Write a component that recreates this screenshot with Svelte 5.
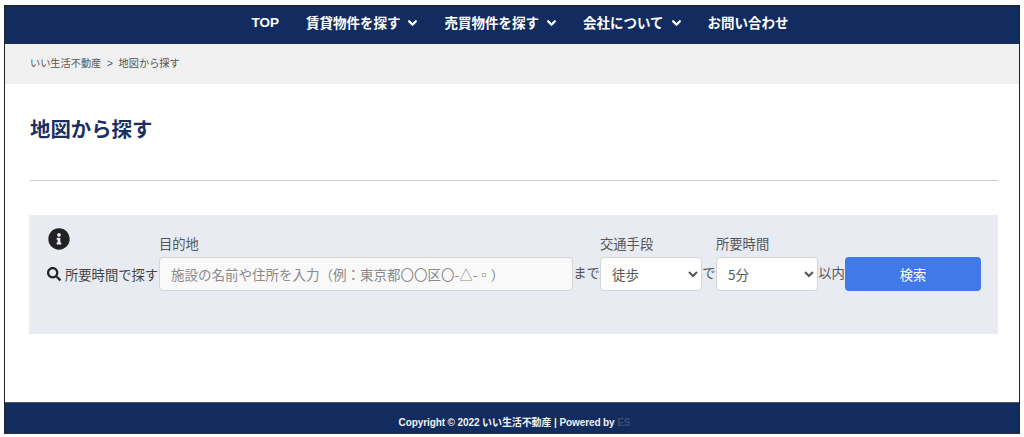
<script>
	const menu = [
		{ label: "TOP" },
		{ label: "賃貸物件を探す", sub: true },
		{ label: "売買物件を探す", sub: true },
		{ label: "会社について", sub: true },
		{ label: "お問い合わせ" }
	];
	const chevron = "M207.029 381.476L12.686 187.132c-9.373-9.373-9.373-24.569 0-33.941l22.667-22.667c9.357-9.357 24.522-9.375 33.901-.04L224 284.505l154.745-154.021c9.379-9.335 24.544-9.317 33.901.04l22.667 22.667c9.373 9.373 9.373 24.569 0 33.941L240.971 381.476c-9.373 9.372-24.569 9.372-33.942 0z";
	let place = "";
	let transport = "徒歩";
	let minutes = "5分";
</script>

<div class="page">
	<div class="frame">
		<nav class="nav">
			{#each menu as item}
				<span class="nav-item">
					{item.label}
					{#if item.sub}
						<svg class="chev" viewBox="0 0 448 512"><path d={chevron} /></svg>
					{/if}
				</span>
			{/each}
		</nav>
		<div class="crumbs">いい生活不動産 &nbsp;&gt;&nbsp; 地図から探す</div>
		<main class="content">
			<h1 class="title">地図から探す</h1>
			<hr class="rule" />
			<section class="panel">
				<div class="side">
					<svg class="info" viewBox="0 0 512 512"><path d="M256 8C119.043 8 8 119.083 8 256c0 136.997 111.043 248 248 248s248-111.003 248-248C504 119.083 392.957 8 256 8zm0 110c23.196 0 42 18.804 42 42s-18.804 42-42 42-42-18.804-42-42 18.804-42 42-42zm56 254c0 6.627-5.373 12-12 12h-88c-6.627 0-12-5.373-12-12v-24c0-6.627 5.373-12 12-12h12v-64h-12c-6.627 0-12-5.373-12-12v-24c0-6.627 5.373-12 12-12h64c6.627 0 12 5.373 12 12v100h12c6.627 0 12 5.373 12 12v24z" /></svg>
					<div class="side-label">
						<svg class="search" viewBox="0 0 512 512"><path d="M505 442.7L405.3 343c-4.5-4.5-10.6-7-17-7H372c27.6-35.3 44-79.7 44-128C416 93.1 322.9 0 208 0S0 93.1 0 208s93.1 208 208 208c48.3 0 92.7-16.4 128-44v16.3c0 6.4 2.5 12.5 7 17l99.7 99.7c9.4 9.4 24.6 9.4 33.9 0l28.3-28.3c9.4-9.4 9.4-24.6.1-34zM208 336c-70.7 0-128-57.2-128-128 0-70.7 57.2-128 128-128 70.7 0 128 57.2 128 128 0 70.7-57.2 128-128 128z" /></svg>
						<span>所要時間で探す</span>
					</div>
				</div>
				<label class="field grow">
					<span class="field-label">目的地</span>
					<input class="control" type="text" bind:value={place} placeholder="施設の名前や住所を入力（例：東京都〇〇区〇-△-▫）" />
				</label>
				<span class="joint wide">まで</span>
				<label class="field">
					<span class="field-label">交通手段</span>
					<select class="control pick" bind:value={transport}>
						<option>徒歩</option>
						<option>車</option>
					</select>
				</label>
				<span class="joint narrow">で</span>
				<label class="field">
					<span class="field-label">所要時間</span>
					<select class="control pick" bind:value={minutes}>
						<option>5分</option>
						<option>10分</option>
						<option>15分</option>
					</select>
				</label>
				<span class="joint wide">以内</span>
				<button class="go" type="button">検索</button>
			</section>
		</main>
		<footer class="foot">
			Copyright © 2022 いい生活不動産 | Powered by <span class="es">ES</span>
		</footer>
	</div>
</div>

<style>
	:global(body) {
		margin: 0;
		background: #fff;
	}

	.page {
		padding: 5px 4px 3px 4px;
		height: 437px;
		box-sizing: border-box;
		font-family: "Liberation Sans", "Noto Sans CJK JP", sans-serif;
	}

	.frame {
		height: 100%;
		box-sizing: border-box;
		border: 1px solid #222;
		border-bottom-color: #333;
		display: flex;
		flex-direction: column;
	}

	.nav {
		height: 38px;
		flex: none;
		background: #132c60;
		color: #fff;
		font-size: 13.5px;
		font-weight: bold;
		display: flex;
		justify-content: center;
		align-items: center;
		gap: 27px;
		padding-left: 16px;
		padding-bottom: 6px;
		box-sizing: border-box;
	}

	.nav-item {
		display: flex;
		align-items: center;
		gap: 8px;
	}

	.chev {
		width: 9px;
		height: 10px;
		fill: #fff;
		stroke: #fff;
		stroke-width: 50;
		margin-top: 2px;
	}

	.crumbs {
		height: 40px;
		flex: none;
		background: #f0f0f0;
		color: #555;
		font-size: 10.2px;
		line-height: 40px;
		padding-left: 25px;
	}

	.content {
		flex: 1;
		padding: 0 21px 0 25px;
	}

	.title {
		margin: 0;
		padding-top: 33px;
		font-size: 20.4px;
		line-height: 27px;
		font-weight: bold;
		color: #1a2f62;
	}

	.rule {
		margin: 36px 0 0 0;
		border: none;
		border-top: 1px solid #ccc;
	}

	.panel {
		margin: 34px 0 0 -1px;
		height: 119px;
		box-sizing: border-box;
		background: #e9ebf2;
		padding: 0 16px 43px 18px;
		display: flex;
		align-items: flex-end;
		font-family: "Noto Sans CJK JP", "Liberation Sans", sans-serif;
		font-size: 13.3px;
		color: #555;
	}

	.side {
		width: 112px;
		flex: none;
		display: flex;
		flex-direction: column;
	}

	.info {
		width: 22px;
		height: 22px;
		margin: 0 0 7px 1px;
		fill: #222;
	}

	.side-label {
		display: flex;
		align-items: center;
		gap: 4px;
		height: 34px;
		white-space: nowrap;
		color: #444;
	}

	.search {
		width: 14px;
		height: 14px;
		flex: none;
		fill: #222;
	}

	.field {
		display: flex;
		flex-direction: column;
	}

	.grow {
		width: 414px;
		flex: none;
	}

	.field-label {
		line-height: 20px;
		margin-bottom: 3px;
	}

	.control {
		height: 34px;
		box-sizing: border-box;
		border: 1px solid #d4d4d4;
		border-radius: 4px;
		font: inherit;
		font-size: 13.5px;
		color: #555;
	}

	input.control {
		width: 100%;
		padding: 0 11px;
		background: #f9f9fa;
	}

	input.control::placeholder {
		color: #8a8a8a;
	}

	.pick {
		width: 102px;
		padding-left: 7px;
		background: #fff;
	}

	.joint {
		height: 34px;
		line-height: 32px;
		text-align: center;
		flex: none;
	}

	.wide {
		width: 27px;
	}

	.narrow {
		width: 14px;
	}

	.go {
		width: 136px;
		height: 34px;
		flex: none;
		border: none;
		border-radius: 4px;
		background: #4279e8;
		color: #fff;
		font: inherit;
	}

	.foot {
		margin-top: auto;
		height: 31px;
		flex: none;
		box-sizing: border-box;
		background: #132c60;
		border-top: 1px solid #555;
		color: #f2f2f2;
		font-size: 10px;
		font-weight: bold;
		letter-spacing: -0.1px;
		text-align: center;
		line-height: 39px;
		padding-left: 5px;
	}

	.es {
		color: #3a4a70;
	}
</style>
